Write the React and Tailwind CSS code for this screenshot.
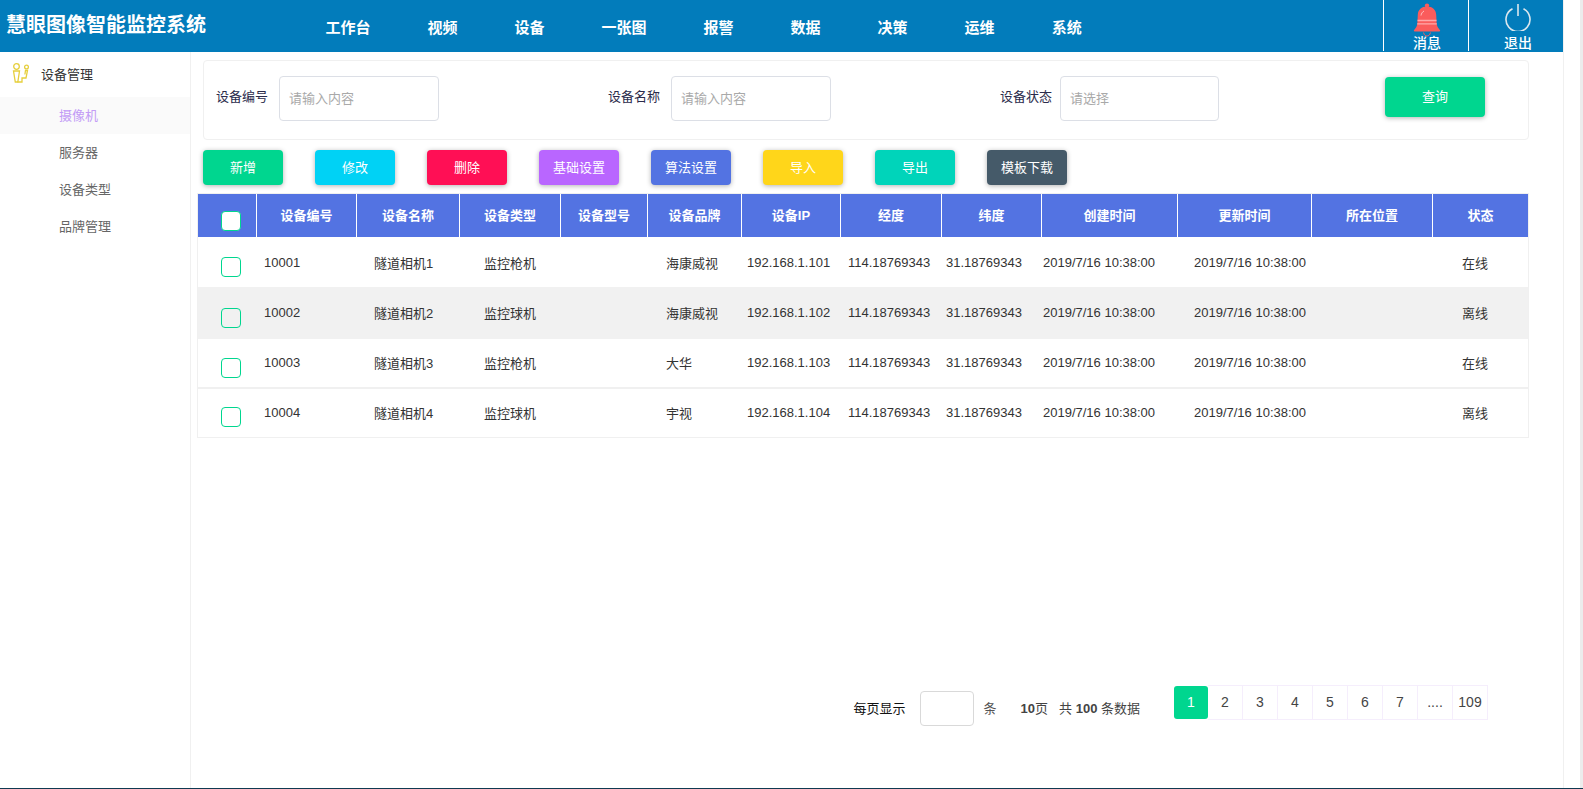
const NAV = ["工作台", "视频", "设备", "一张图", "报警", "数据", "决策", "运维", "系统"];
const SIDE = ["摄像机", "服务器", "设备类型", "品牌管理"];
const ACTIONS = [
  ["新增", "bg-[#00d68f]"],
  ["修改", "bg-[#00d2f5]"],
  ["删除", "bg-[#ff0f55]"],
  ["基础设置", "bg-[#b966ff]"],
  ["算法设置", "bg-[#5373e2]"],
  ["导入", "bg-[#ffd61a]"],
  ["导出", "bg-[#00d4ba]"],
  ["模板下载", "bg-[#455a69]"],
];
const HEADS = ["设备编号", "设备名称", "设备类型", "设备型号", "设备品牌", "设备IP", "经度", "纬度", "创建时间", "更新时间", "所在位置", "状态"];
const ROWS = [
  { id: "10001", name: "隧道相机1", type: "监控枪机", brand: "海康威视", ip: "192.168.1.101", status: "在线", h: "h-[49px] pt-[2px]", bg: "bg-white", chk: "pt-[6px]" },
  { id: "10002", name: "隧道相机2", type: "监控球机", brand: "海康威视", ip: "192.168.1.102", status: "离线", h: "h-[52px]", bg: "bg-[#f1f1f1]", chk: "pt-[10px]" },
  { id: "10003", name: "隧道相机3", type: "监控枪机", brand: "大华", ip: "192.168.1.103", status: "在线", h: "h-[48px]", bg: "bg-white", chk: "pt-[10px]" },
  { id: "10004", name: "隧道相机4", type: "监控球机", brand: "宇视", ip: "192.168.1.104", status: "离线", h: "h-[50px] border-t-2 border-[#f0f0f0]", bg: "bg-white", chk: "pt-[8px]" },
];
const PAGES = ["2", "3", "4", "5", "6", "7", "....", "109"];
const COLS = "grid grid-cols-[59px_100px_103px_101px_87px_94px_99px_101px_100px_136px_134px_121px_95px]";

function Bell() {
  return (
    <svg width="28" height="34" viewBox="0 0 28 34" className="block">
      <circle cx="14" cy="2.6" r="2.2" fill="#fa5c5c" />
      <path d="M14 3.500c-5.500 0-9 3.200-9.200 8.200l-.4 8.400c-.1 3-1.600 5-3.400 7.200-.4.600 0 1.200.7 1.200h24.600c.7 0 1.100-.6.7-1.200-1.800-2.200-3.300-4.200-3.400-7.200l-.4-8.400C23 6.700 19.500 3.500 14 3.500z" fill="#fa5c5c" />
      <path d="M4.500 17.500h19M4.200 20.800h19.600" stroke="#ffa9a9" strokeWidth="1.300" fill="none" />
      <path d="M8 12.500c.3-2 1.300-3.500 3-4.500" stroke="#ffd5d5" strokeWidth="0.800" fill="none" />
      <path d="M10.500 29.500c.5 2.400 2 3.500 3.500 3.500s3-1.100 3.500-3.500" stroke="#fa5c5c" strokeWidth="0.900" fill="none" />
    </svg>
  );
}

function PowerIcon() {
  return (
    <svg width="28" height="28" viewBox="0 0 28 28" fill="none" stroke="#dbe7ee" strokeWidth="1.600" className="block">
      <path d="M8.500 5.800a12 12 0 1 0 11 0" />
      <path d="M14 1v12" />
    </svg>
  );
}

function DeviceIcon() {
  return (
    <svg width="20" height="24" viewBox="0 0 20 24" fill="none" stroke="#e6cf3c" strokeWidth="1.300" className="block">
      <circle cx="4.500" cy="3.500" r="2.800" />
      <circle cx="14.500" cy="4" r="1.900" />
      <path d="M1.500 8h6L5.800 19H3.300z" />
      <path d="M5.500 19h4.500v-4h4l1.500-7.500h-2l-.6 4" />
    </svg>
  );
}

function Field({ label, placeholder, className, inputWidth, gap }) {
  return (
    <>
      <span className={"text-[13px] text-[#2b2b4b] pb-[3px] whitespace-nowrap " + className}>{label}</span>
      <div className={"h-[45px] border border-[#dcdfe6] rounded flex items-center pl-[9px] text-[13px] text-[#a9a9a9] " + inputWidth + " " + gap}>{placeholder}</div>
    </>
  );
}

function Check({ white }) {
  return <div className={"w-5 h-5 rounded-[4px] border border-[#00d68f] " + (white ? "bg-white" : "")}></div>;
}

export default function App() {
  return (
    <div className="w-[1583px] h-[789px] overflow-hidden flex flex-col bg-white text-[#333] font-['Liberation_Sans','Noto_Sans_CJK_SC',sans-serif]">
      <div className="flex flex-1 min-h-0">
        <div className="w-[1564px] flex flex-col border-r border-[#f0f0f0]">
          {/* top bar */}
          <header className="h-[52px] shrink-0 bg-[#027cbb] text-white flex">
            <div className="w-[297px] pl-[6px] pt-[10px] text-[20px] leading-[30px] font-bold whitespace-nowrap">慧眼图像智能监控系统</div>
            <nav className="flex flex-1">
              {NAV.map(n => (
                <span key={n} className="px-[28.5px] pt-[17px] text-[15px] leading-[22px] font-bold whitespace-nowrap">{n}</span>
              ))}
            </nav>
            <div className="w-[85px] h-[51px] border-l border-white flex flex-col items-center pt-[3px] pl-[2px]">
              <Bell />
              <span className="text-[14px] leading-[14px] -mt-[1px] font-medium">消息</span>
            </div>
            <div className="w-[95px] h-[51px] border-l border-white flex flex-col items-center pt-[3px] pl-[4px]">
              <PowerIcon />
              <span className="text-[14px] leading-[14px] mt-[5px] font-medium">退出</span>
            </div>
          </header>

          <div className="flex flex-1 min-h-0">
            {/* side menu */}
            <aside className="w-[191px] shrink-0 border-r border-[#f0f0f0]">
              <div className="h-[45px] flex items-center pl-[12px] text-[13px] text-[#333]">
                <DeviceIcon />
                <span className="ml-[9px]">设备管理</span>
              </div>
              {SIDE.map((s, i) => (
                <div key={s} className={"h-[37px] flex items-center pl-[59px] text-[13px] " + (i === 0 ? "bg-[#fafafa] text-[#c39cf6]" : "text-[#666]")}>{s}</div>
              ))}
            </aside>

            <main className="flex-1 min-w-0 flex flex-col">
              {/* search */}
              <div className="mt-2 ml-3 w-[1326px] h-[80px] border border-[#f0f0f0] rounded flex items-center pl-3 pb-[3px]">
                <Field label="设备编号" placeholder="请输入内容" inputWidth="w-[160px]" gap="ml-[11px]" />
                <Field label="设备名称" placeholder="请输入内容" className="ml-[169px]" inputWidth="w-[160px]" gap="ml-[11px]" />
                <Field label="设备状态" placeholder="请选择" className="ml-[169px]" inputWidth="w-[159px]" gap="ml-[8px]" />
                <button className="ml-[166px] mb-[3px] w-[100px] h-10 rounded bg-[#00d68f] text-white text-[13px] shadow-[0_1px_5px_rgba(0,0,0,0.3)]">查询</button>
              </div>

              {/* actions */}
              <div className="mt-[10px] ml-3 flex gap-8">
                {ACTIONS.map(([t, c]) => (
                  <button key={t} className={"w-20 h-[35px] rounded text-white text-[13px] shadow-[0_1px_5px_rgba(0,0,0,0.3)] " + c}>{t}</button>
                ))}
              </div>

              {/* table */}
              <div className="mt-2 ml-[6px] w-[1332px] border border-[#f0f0f0]">
                <div className={COLS + " h-[43px] bg-[#5373e2] text-white text-[13px] font-bold mb-px"}>
                  <div className="border-r border-white flex items-center justify-center pt-[10px] pl-[7px]"><Check white /></div>
                  {HEADS.map((h, i) => (
                    <div key={h} className={"flex items-center justify-center " + (i < HEADS.length - 1 ? "border-r border-white" : "")}>{h}</div>
                  ))}
                </div>
                {ROWS.map(r => (
                  <div key={r.id} className={COLS + " items-center text-[13px] " + r.h + " " + r.bg}>
                    <div className={"flex justify-center pl-[7px] " + r.chk}><Check /></div>
                    <div className="pl-[7px] pb-px">{r.id}</div>
                    <div className="pl-[17px] pt-px">{r.name}</div>
                    <div className="pl-[24px] pt-px">{r.type}</div>
                    <div></div>
                    <div className="pl-[18px] pt-px">{r.brand}</div>
                    <div className="pl-[5px] pb-px">{r.ip}</div>
                    <div className="pl-[7px] pb-px">114.18769343</div>
                    <div className="pl-[4px] pb-px">31.18769343</div>
                    <div className="pl-px pb-px whitespace-nowrap">2019/7/16 10:38:00</div>
                    <div className="pl-[16px] pb-px whitespace-nowrap">2019/7/16 10:38:00</div>
                    <div></div>
                    <div className="pl-[29px] pt-px">{r.status}</div>
                  </div>
                ))}
              </div>

              {/* pager */}
              <div className="mt-[247px] pr-[75px] flex justify-end items-start text-[13px]">
                <div className="flex items-center h-[35px] mt-[6px] pt-px text-[#444] whitespace-nowrap">
                  <span className="text-[#111]">每页显示</span>
                  <div className="ml-[14px] w-[54px] h-[35px] -mt-px border border-[#d9d9d9] rounded"></div>
                  <span className="ml-[10px] text-[#555]">条</span>
                  <span className="ml-[24px]"><b>10</b>页</span>
                  <span className="ml-[11px]">共 <b>100</b> 条数据</span>
                </div>
                <div className="ml-[34px] flex text-[14px] text-[#444]">
                  <div className="w-[34px] h-[33px] mt-px rounded-[3px] bg-[#00d68f] text-white flex items-center justify-center">1</div>
                  {PAGES.map(p => (
                    <div key={p} className="w-[35px] h-[35px] border-y border-r border-[#f5eefc] flex items-center justify-center">{p}</div>
                  ))}
                </div>
              </div>
            </main>
          </div>
        </div>
        <div className="flex-1"></div>
        <div className="w-[3px] bg-[#ececec]"></div>
      </div>
      <div className="h-px shrink-0 bg-[#0f3a52]"></div>
    </div>
  );
}
